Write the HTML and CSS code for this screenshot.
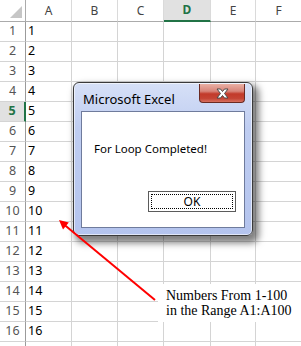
FILE: index.html
```html
<!DOCTYPE html>
<html>
<head>
<meta charset="utf-8">
<link rel="stylesheet" href="styles.css">
</head>
<body>
<div class="sheet">
  <div class="grid">
    <div class="ch corner"><span class="tri"></span></div>
    <div class="ch">A</div><div class="ch">B</div><div class="ch">C</div><div class="ch sel">D</div><div class="ch">E</div><div class="ch">F</div>

    <div class="rh">1</div><div class="c">1</div><div class="c"></div><div class="c"></div><div class="c"></div><div class="c"></div><div class="c"></div>
    <div class="rh">2</div><div class="c">2</div><div class="c"></div><div class="c"></div><div class="c"></div><div class="c"></div><div class="c"></div>
    <div class="rh">3</div><div class="c">3</div><div class="c"></div><div class="c"></div><div class="c"></div><div class="c"></div><div class="c"></div>
    <div class="rh">4</div><div class="c">4</div><div class="c"></div><div class="c"></div><div class="c"></div><div class="c"></div><div class="c"></div>
    <div class="rh sel">5</div><div class="c">5</div><div class="c"></div><div class="c"></div><div class="c"></div><div class="c"></div><div class="c"></div>
    <div class="rh">6</div><div class="c">6</div><div class="c"></div><div class="c"></div><div class="c"></div><div class="c"></div><div class="c"></div>
    <div class="rh">7</div><div class="c">7</div><div class="c"></div><div class="c"></div><div class="c"></div><div class="c"></div><div class="c"></div>
    <div class="rh">8</div><div class="c">8</div><div class="c"></div><div class="c"></div><div class="c"></div><div class="c"></div><div class="c"></div>
    <div class="rh">9</div><div class="c">9</div><div class="c"></div><div class="c"></div><div class="c"></div><div class="c"></div><div class="c"></div>
    <div class="rh">10</div><div class="c">10</div><div class="c"></div><div class="c"></div><div class="c"></div><div class="c"></div><div class="c"></div>
    <div class="rh">11</div><div class="c">11</div><div class="c"></div><div class="c"></div><div class="c"></div><div class="c"></div><div class="c"></div>
    <div class="rh">12</div><div class="c">12</div><div class="c"></div><div class="c"></div><div class="c"></div><div class="c"></div><div class="c"></div>
    <div class="rh">13</div><div class="c">13</div><div class="c"></div><div class="c"></div><div class="c"></div><div class="c"></div><div class="c"></div>
    <div class="rh">14</div><div class="c">14</div><div class="c"></div><div class="c"></div><div class="c"></div><div class="c"></div><div class="c"></div>
    <div class="rh">15</div><div class="c">15</div><div class="c"></div><div class="c"></div><div class="c"></div><div class="c"></div><div class="c"></div>
    <div class="rh">16</div><div class="c">16</div><div class="c"></div><div class="c"></div><div class="c"></div><div class="c"></div><div class="c"></div>
    <div class="rh"></div><div class="c"></div><div class="c"></div><div class="c"></div><div class="c"></div><div class="c"></div><div class="c"></div>
  </div>

  <div class="dialog">
    <div class="titlebar">
      <span class="title">Microsoft Excel</span>
      <span class="close">
        <svg width="15" height="11" viewBox="0 0 15 11"><path d="M2 1 H5.5 L7.5 3.5 L9.5 1 H13 L9.5 5.5 L13 10 H9.5 L7.5 7.5 L5.5 10 H2 L5.5 5.5 Z" fill="#fff" stroke="#4a4a4a" stroke-width="1" stroke-linejoin="round"/></svg>
      </span>
    </div>
    <div class="panel">
      <p class="msg">For Loop Completed!</p>
      <div class="actions"><button class="ok"><span>OK</span></button></div>
    </div>
  </div>

  <div class="note">Numbers From 1-100<br>in the Range A1:A100</div>

  <svg class="arrow" width="301" height="346" viewBox="0 0 301 346">
    <line x1="64" y1="224.5" x2="155" y2="300" stroke="#ff0000" stroke-width="2"/>
    <polygon points="59,220 63,229.5 68.8,222.5" fill="#ff0000"/>
  </svg>
</div>
</body>
</html>
```

FILE: styles.css
```css
html, body {
  margin: 0;
  padding: 0;
  background: #fff;
}
.sheet {
  position: relative;
  width: 301px;
  height: 346px;
  overflow: hidden;
  font-family: "Noto Sans", "Open Sans", sans-serif;
}
.grid {
  display: grid;
  grid-template-columns: 26px 46px 46px 46px 47px 45px 46px;
  grid-template-rows: 22px repeat(17, 20px);
}
.grid > div {
  box-sizing: border-box;
  border-right: 1px solid #d4d4d4;
  border-bottom: 1px solid #d4d4d4;
  display: flex;
  align-items: center;
  font-size: 12.5px;
  line-height: 1;
}
.ch {
  justify-content: center;
  color: #444;
  font-size: 12px !important;
  border-bottom-color: #ababab !important;
  border-right-color: #dadada !important;
}
.ch.sel {
  background: #e1e1e1;
  color: #217346;
  font-weight: bold;
  border-bottom: 2px solid #217346 !important;
}
.corner {
  position: relative;
  border-right-color: #ababab !important;
}
.tri {
  position: absolute;
  right: 3px;
  bottom: 3px;
  width: 0;
  height: 0;
  border-left: 12px solid transparent;
  border-bottom: 12px solid #c6c6c6;
}
.rh {
  justify-content: center;
  color: #555;
  border-right-color: #9b9b9b !important;
}
.rh.sel {
  background: #e1e1e1;
  color: #217346;
  font-weight: bold;
  border-right: 2px solid #217346 !important;
}
.c {
  padding-left: 2px;
  color: #000;
}

.dialog {
  position: absolute;
  left: 73px;
  top: 82px;
  width: 180px;
  height: 154px;
  box-sizing: border-box;
  border: 1px solid #3a3a3a;
  border-radius: 6px;
  background: linear-gradient(to bottom, #d6e0f7 0%, #bfcdf1 30%, #b4c4ee 100%);
  box-shadow: inset 0 0 0 1px rgba(255,255,255,0.6), 4px 5px 7px 2px rgba(0,0,0,0.5);
  display: flex;
  flex-direction: column;
  padding: 0 7px 7px 7px;
}
.titlebar {
  height: 28px;
  display: flex;
  align-items: flex-start;
  justify-content: space-between;
  flex: none;
}
.title {
  font-size: 13px;
  color: #000;
  margin-top: 7px;
  margin-left: 2px;
}
.close {
  width: 46px;
  height: 19px;
  margin-right: 0;
  margin-top: 1px;
  box-sizing: border-box;
  border: 1px solid #6b2a22;
  border-top: none;
  border-radius: 0 0 4px 4px;
  background: linear-gradient(to bottom, #eab0a4 0%, #d8857a 40%, #c23a2a 55%, #c44434 80%, #d8705f 100%);
  display: flex;
  align-items: center;
  justify-content: center;
}
.close svg {
  display: block;
}
.panel {
  flex: 1;
  background: #fff;
  border: 1px solid #6f7b9c;
  position: relative;
  display: flex;
  flex-direction: column;
}
.msg {
  margin: 29px 0 0 12px;
  font-size: 11.5px;
  color: #000;
}
.actions {
  margin-top: auto;
  margin-bottom: 15px;
  display: flex;
  justify-content: flex-end;
  padding-right: 8px;
}
.ok {
  width: 88px;
  height: 21px;
  box-sizing: border-box;
  border: 1px solid #5b5b5b;
  background: #fff;
  padding: 2px;
  margin: 0;
  font-family: "Noto Sans", "Open Sans", sans-serif;
  font-size: 12px;
  color: #000;
  display: flex;
}
.ok span {
  flex: 1;
  border: 1px dotted #000;
  display: flex;
  align-items: center;
  justify-content: center;
  line-height: 1;
}

.note {
  position: absolute;
  left: 158px;
  top: 284px;
  right: 0;
  height: 38px;
  background: #fff;
  padding: 4px 0 0 8px;
  box-sizing: border-box;
  font-family: "Liberation Serif", "DejaVu Serif", serif;
  font-size: 14px;
  line-height: 15px;
  color: #000;
}
.arrow {
  position: absolute;
  left: 0;
  top: 0;
  pointer-events: none;
}
```
